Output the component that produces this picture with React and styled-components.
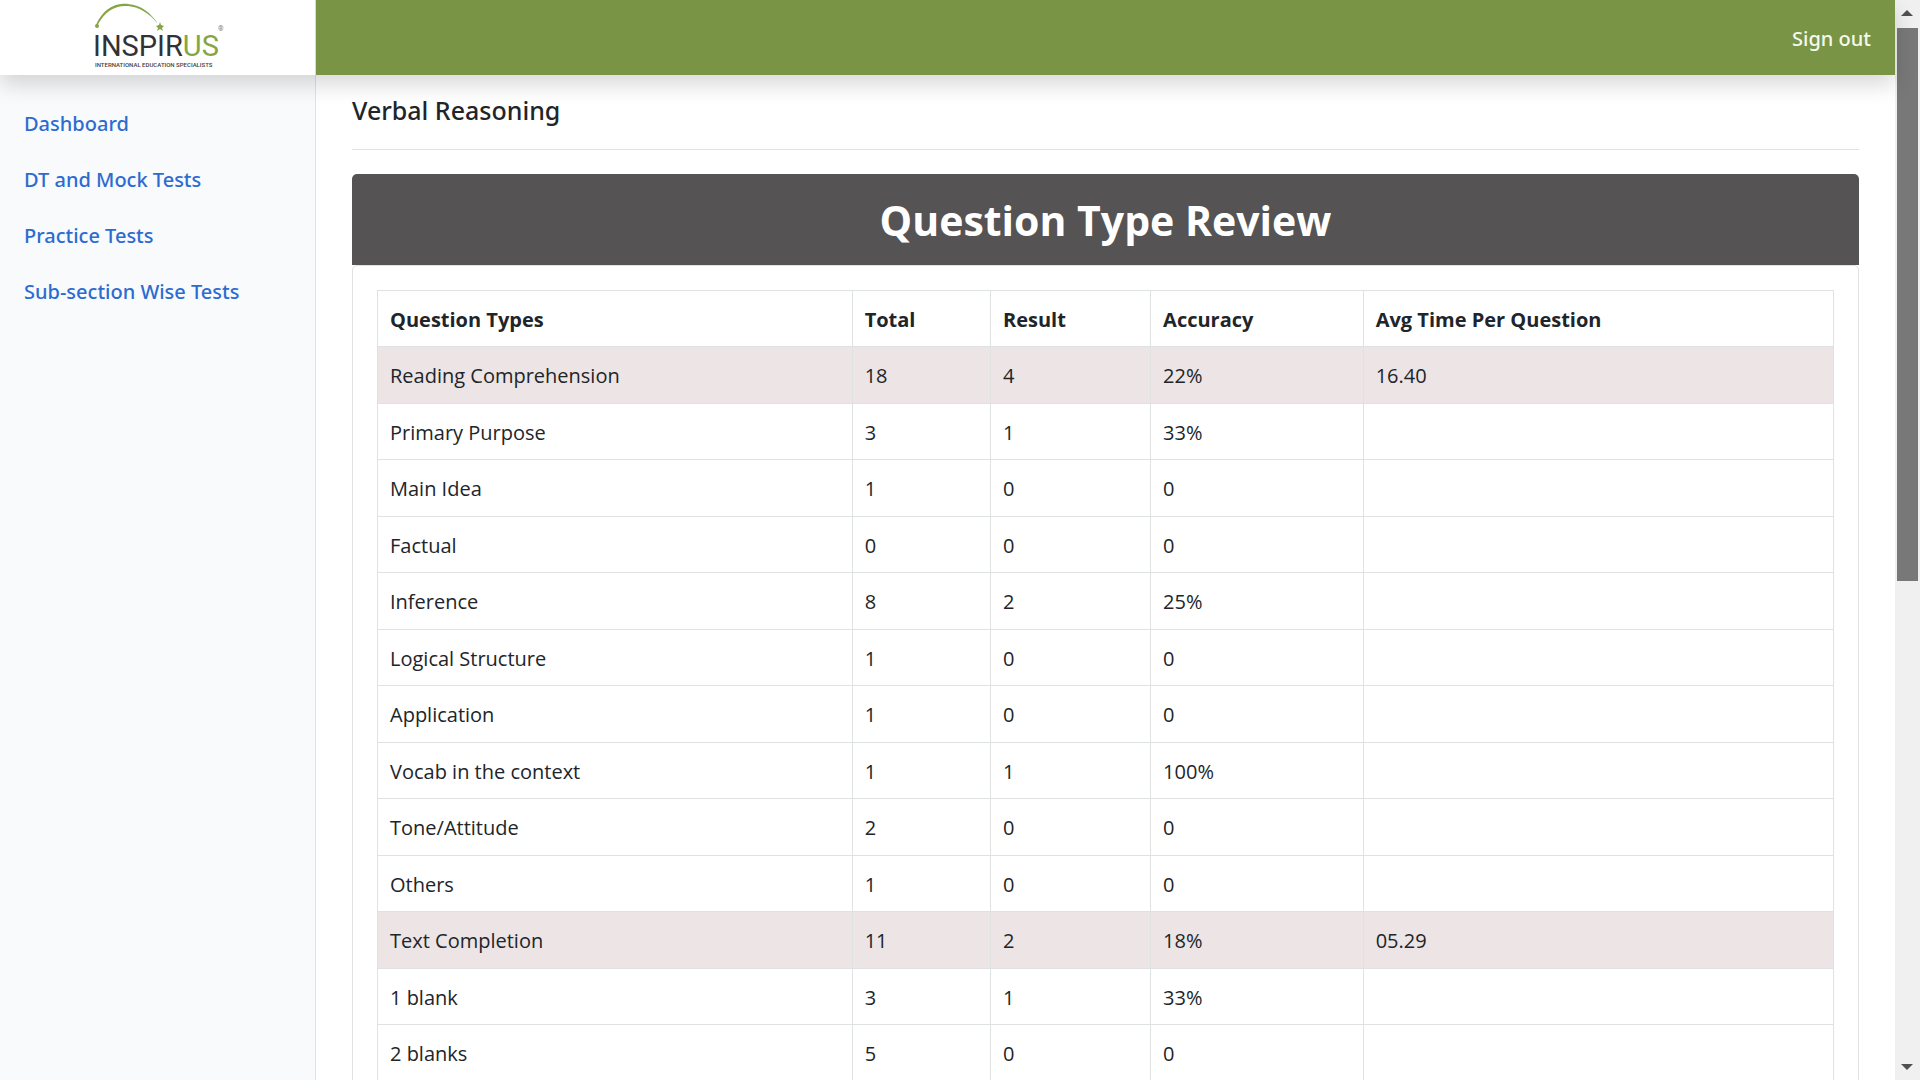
import React from "react";
import styled, { createGlobalStyle } from "styled-components";

const GlobalStyle = createGlobalStyle`
  *, *::before, *::after {
    box-sizing: border-box;
  }

  body {
    margin: 0;
    background: #fff;
    color: #212529;
    font-family: "Open Sans", "Noto Sans", sans-serif;
    font-size: 20px;
    line-height: 30px;
  }
`;

const Shell = styled.div`
  display: flex;
  height: 100vh;
  overflow: hidden;
`;

const Page = styled.div`
  flex: 1;
  min-width: 0;
  display: flex;
  flex-direction: column;
`;

const Header = styled.header`
  position: relative;
  z-index: 1;
  flex: none;
  display: flex;
  height: 75px;
  background: #799445;
  box-shadow: 0 10px 20px rgba(0, 0, 0, 0.15);
`;

const Brand = styled.a`
  width: 316px;
  background: #fff;
  border-right: 1px solid #d5dbd3;

  svg {
    display: block;
    margin-left: 80px;
  }
`;

const SignOut = styled.a`
  margin-left: auto;
  padding: 24px 24px 0 0;
  color: #f4f9ec;
  font-family: "Noto Sans", sans-serif;
  font-weight: 500;
  text-decoration: none;
`;

const Body = styled.div`
  flex: 1;
  min-height: 0;
  display: flex;
`;

const Sidebar = styled.nav`
  flex: none;
  width: 316px;
  padding: 21px 0;
  background: #f8fafc;
  border-right: 1px solid #dfe3e5;
`;

const NavItem = styled.a`
  display: block;
  padding: 13px 24px;
  color: #2c6cd0;
  font-family: "Noto Sans", sans-serif;
  font-weight: 500;
  text-decoration: none;
`;

const Content = styled.main`
  flex: 1;
  min-width: 0;
  padding: 0 36px;
  overflow: hidden;
`;

const Title = styled.h1`
  margin: 0 0 24px;
  padding: 20px 0 24px;
  border-bottom: 1px solid #dee2e6;
  font-family: "Noto Sans", sans-serif;
  font-size: 25px;
  font-weight: 500;
  line-height: 30px;
`;

const CardTitle = styled.h2`
  margin: 0;
  padding: 19px 20px 17px;
  border-radius: 5px 5px 0 0;
  background: #555354;
  color: #fff;
  font-size: 41px;
  font-weight: 700;
  line-height: 55px;
  text-align: center;
`;

const CardBody = styled.div`
  padding: 24px;
  border: 1px solid #dfe1e3;
  border-radius: 5px;
`;

const Table = styled.table`
  width: 100%;
  border-collapse: collapse;
  table-layout: fixed;
`;

const Col = styled.col`
  width: ${({ $width }) => $width};
`;

const Row = styled.tr`
  height: 56px;
  background: ${({ $section }) => ($section ? "#ece4e5" : "#fff")};

  tbody &:nth-child(odd) {
    height: 57px;
  }

  th,
  td {
    padding: 2px 12px 0;
    border: 1px solid #dee2e3;
    text-align: left;
  }

  th {
    font-weight: 700;
  }
`;

const Scrollbar = styled.div`
  flex: none;
  display: flex;
  flex-direction: column;
  align-items: center;
  width: 25px;
  background: #f0f0f0;
`;

const Arrow = styled.svg`
  flex: none;
  width: 25px;
  height: 28px;
  fill: #505050;
`;

const Track = styled.div`
  flex: 1;
  width: 21px;
`;

const Thumb = styled.div`
  height: 54%;
  background: #787878;
`;

const links = ["Dashboard", "DT and Mock Tests", "Practice Tests", "Sub-section Wise Tests"];

const columns = [
  { label: "Question Types", width: "32.6%" },
  { label: "Total", width: "9.5%" },
  { label: "Result", width: "11%" },
  { label: "Accuracy", width: "14.6%" },
  { label: "Avg Time Per Question", width: "auto" },
];

const rows = [
  { type: "Reading Comprehension", total: 18, result: 4, accuracy: "22%", time: "16.40", section: true },
  { type: "Primary Purpose", total: 3, result: 1, accuracy: "33%" },
  { type: "Main Idea", total: 1, result: 0, accuracy: "0" },
  { type: "Factual", total: 0, result: 0, accuracy: "0" },
  { type: "Inference", total: 8, result: 2, accuracy: "25%" },
  { type: "Logical Structure", total: 1, result: 0, accuracy: "0" },
  { type: "Application", total: 1, result: 0, accuracy: "0" },
  { type: "Vocab in the context", total: 1, result: 1, accuracy: "100%" },
  { type: "Tone/Attitude", total: 2, result: 0, accuracy: "0" },
  { type: "Others", total: 1, result: 0, accuracy: "0" },
  { type: "Text Completion", total: 11, result: 2, accuracy: "18%", time: "05.29", section: true },
  { type: "1 blank", total: 3, result: 1, accuracy: "33%" },
  { type: "2 blanks", total: 5, result: 0, accuracy: "0" },
];

const Logo = () => (
  <svg width="160" height="75" viewBox="0 0 160 75" role="img" aria-label="Inspirus">
    <path d="M16 25C24 7 37 3 48 4C61 5 71 13 78 24C70 14 60 7 48 6C35 5 25 11 17 26Z" fill="#86a544" />
    <circle cx="17" cy="26" r="2" fill="#86a544" />
    <path d="M80 22l1 3 3 1-2 2 1 3-3-2-3 2 1-3-2-2 3-1z" fill="#86a544" />
    <text x="13" y="56" fontFamily="Roboto, sans-serif" fontSize="29" fill="#303236">
      INSPIR<tspan fill="#86a544">US</tspan>
    </text>
    <text x="138" y="31" fontFamily="Roboto, sans-serif" fontSize="7" fill="#777">®</text>
    <text x="15" y="67" fontFamily="Roboto, sans-serif" fontSize="6" fontWeight="500" fill="#444">
      INTERNATIONAL EDUCATION SPECIALISTS
    </text>
  </svg>
);

const App = () => {
  return (
    <Shell>
      <GlobalStyle />
      <Page>
        <Header>
          <Brand href="#"><Logo /></Brand>
          <SignOut href="#">Sign out</SignOut>
        </Header>

        <Body>
          <Sidebar>
            {links.map((link) => (
              <NavItem href="#" key={link}>{link}</NavItem>
            ))}
          </Sidebar>

          <Content>
            <Title>Verbal Reasoning</Title>
            <CardTitle>Question Type Review</CardTitle>
            <CardBody>
              <Table>
                <colgroup>
                  {columns.map((col) => <Col key={col.label} $width={col.width} />)}
                </colgroup>
                <thead>
                  <Row>
                    {columns.map((col) => <th scope="col" key={col.label}>{col.label}</th>)}
                  </Row>
                </thead>
                <tbody>
                  {rows.map((row) => (
                    <Row key={row.type} $section={row.section}>
                      <td>{row.type}</td>
                      <td>{row.total}</td>
                      <td>{row.result}</td>
                      <td>{row.accuracy}</td>
                      <td>{row.time}</td>
                    </Row>
                  ))}
                </tbody>
              </Table>
            </CardBody>
          </Content>
        </Body>
      </Page>

      <Scrollbar aria-hidden="true">
        <Arrow viewBox="0 0 25 28"><path d="M6 16l6-6 6 6z" /></Arrow>
        <Track><Thumb /></Track>
        <Arrow viewBox="0 0 25 28"><path d="M6 12h12l-6 6z" /></Arrow>
      </Scrollbar>
    </Shell>
  );
};

export default App;
